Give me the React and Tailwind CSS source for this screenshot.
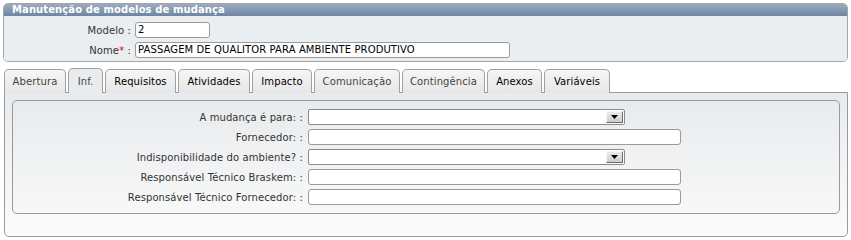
const tabs = [
  { label: 'Abertura', w: 'w-[62px]', dark: false },
  { label: 'Inf.', w: 'w-[35px]', dark: false, active: true },
  { label: 'Requisitos', w: 'w-[71px]', dark: true },
  { label: 'Atividades', w: 'w-[72px]', dark: true },
  { label: 'Impacto', w: 'w-[60px]', dark: true },
  { label: 'Comunicação', w: 'w-[86px]', dark: false },
  { label: 'Contingência', w: 'w-[83px]', dark: false },
  { label: 'Anexos', w: 'w-[55px]', dark: true },
  { label: 'Variáveis', w: 'w-[66px]', dark: true },
]

const fields = [
  { label: 'A mudança é para: :', type: 'select' },
  { label: 'Fornecedor: :', type: 'text' },
  { label: 'Indisponibilidade do ambiente? :', type: 'select' },
  { label: 'Responsável Técnico Braskem: :', type: 'text' },
  { label: 'Responsável Técnico Fornecedor: :', type: 'text' },
]

function TextBox({ className = '', value = '' }) {
  return (
    <div className={`h-[16px] rounded-[3px] border border-[#9a9a9a] bg-white px-[2px] text-[10px] leading-[14px] text-black ${className}`}>
      {value}
    </div>
  )
}

function SelectBox() {
  return (
    <div className="flex h-[16px] w-[317px] items-stretch rounded-[2px] border border-[#8c8c8c] bg-white">
      <div className="flex-1" />
      <div className="my-px mr-px flex w-[17px] items-end justify-center border border-t-[#f6f6f6] border-l-[#f6f6f6] border-r-[#6a6a6a] border-b-[#6a6a6a] bg-gradient-to-b from-[#ececec] to-[#cdcdcd] pb-[3px]">
        <svg width="7" height="4" viewBox="0 0 7 4">
          <path d="M0 0h7L3.5 4z" fill="#000" />
        </svg>
      </div>
    </div>
  )
}

export default function App() {
  return (
    <div className="w-[851px] h-[240px] bg-white px-[3px] pt-[3px] font-['DejaVu_Sans',sans-serif] text-[10px] tracking-[0.1px] text-[#333]">
      {/* Manutenção header panel */}
      <div className="overflow-hidden rounded-[5px] border border-[#a5a5a5]">
        <div className="h-[12px] bg-gradient-to-b from-[#9cacc0] to-[#6d86a3] pl-[8px] text-[10px] font-bold leading-[12px] text-white">
          Manutenção de modelos de mudança
        </div>
        <div className="flex flex-col gap-[4px] bg-[#ebeef0] pt-[6px] pb-[3px]">
          <div className="flex items-center">
            <div className="w-[131px] pr-[4px] text-right">Modelo :</div>
            <TextBox className="w-[75px]" value="2" />
          </div>
          <div className="flex items-center">
            <div className="w-[131px] pr-[4px] text-right">
              Nome<span className="text-[#e00]">*</span> :
            </div>
            <TextBox className="w-[375px]" value="PASSAGEM DE QUALITOR PARA AMBIENTE PRODUTIVO" />
          </div>
        </div>
      </div>

      {/* Tabs */}
      <div className="mt-[6px] ml-px flex items-end gap-[2px]">
        {tabs.map(t => (
          <div
            key={t.label}
            className={`${t.w} relative flex h-[24px] items-center justify-center rounded-t-[5px] border border-b-0 border-[#a0a0a0] ${
              t.active ? 'z-10 h-[25px] bg-[#e9ecee]' : 'bg-gradient-to-b from-[#f6f6f6] to-[#e6e6e6]'
            } ${t.dark ? 'text-[#000]' : 'text-[#444]'}`}
          >
            {t.label}
          </div>
        ))}
      </div>

      {/* Tab content */}
      <div className="-mt-px ml-px h-[145px] rounded-b-[5px] border border-[#9a9a9a] bg-gradient-to-b from-[#e8ebed] to-[#fbfbfb] px-[7px] pt-[7px]">
        <div className="flex flex-col gap-[4px] rounded-[5px] border border-[#9a9a9a] bg-gradient-to-b from-[#e8ebed] to-[#f8f8f8] pt-[8px] pb-[8px]">
          {fields.map(f => (
            <div key={f.label} className="flex items-center">
              <div className="w-[295px] pr-[5px] text-right">{f.label}</div>
              {f.type === 'select' ? <SelectBox /> : <TextBox className="w-[373px]" />}
            </div>
          ))}
        </div>
      </div>
    </div>
  )
}
